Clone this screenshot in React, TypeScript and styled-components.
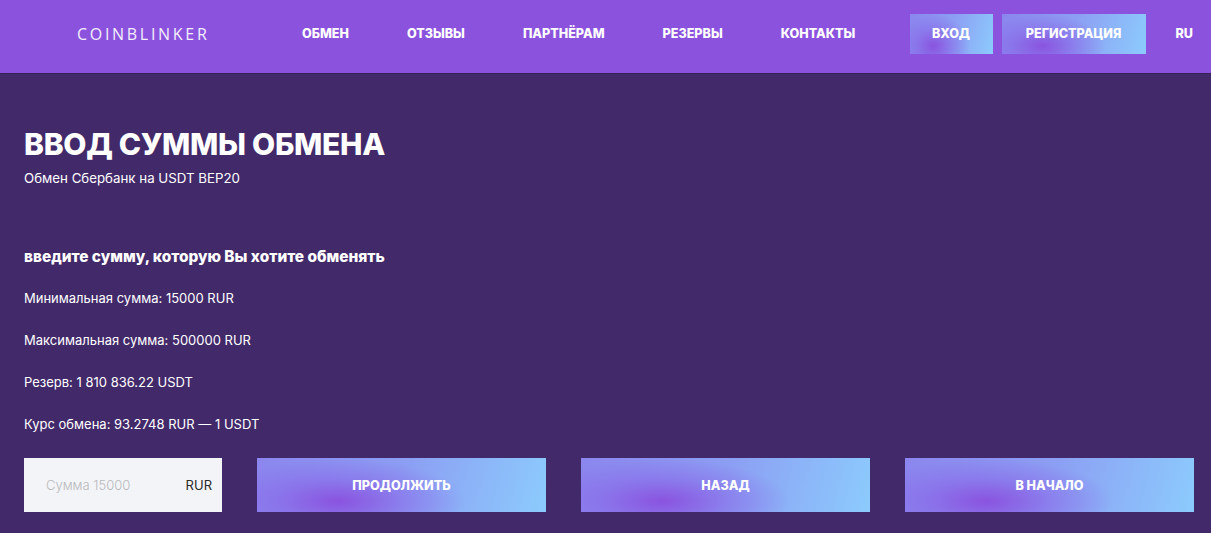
import React from "react";
import styled, { createGlobalStyle } from "styled-components";

const Global = createGlobalStyle`
  html, body { margin: 0; padding: 0; background: #42296a; }
  body { font-family: Inter, "Noto Sans", sans-serif; color: #fff; }
  * { box-sizing: border-box; }
`;

const Page = styled.div`
  min-height: 533px;
  background: #42296a;
`;

const Header = styled.header`
  height: 74px;
  background: #8b53dd;
  border-bottom: 1px solid #36205a;
  display: flex;
  align-items: center;
  padding: 0 18px 6px 77px;
`;

const Logo = styled.div`
  font-family: "Open Sans", sans-serif;
  font-weight: 400;
  font-size: 16px;
  letter-spacing: 2.7px;
  color: #f4eefc;
  width: 225px;
`;

const Nav = styled.nav`
  display: flex;
  gap: 58px;
  flex: 1;
`;

const NavLink = styled.a`
  font-weight: 800;
  font-size: 12.6px;
  text-transform: uppercase;
  color: #fff;
  text-decoration: none;
`;

const Gradient = `
  background:
    radial-gradient(ellipse 55% 100% at 28% 80%, rgba(138,80,222,0.95) 0%, rgba(138,100,232,0.55) 40%, rgba(140,140,240,0) 80%),
    linear-gradient(105deg, #8b86ee 0%, #8c9ff3 50%, #8ccbfd 100%);
`;

const AuthGroup = styled.div`
  display: flex;
  align-items: center;
  gap: 9px;
`;

const HeadBtn = styled.a<{ $w: number }>`
  ${Gradient}
  width: ${(p) => p.$w}px;
  height: 40px;
  display: flex;
  align-items: center;
  justify-content: center;
  font-weight: 800;
  font-size: 12.6px;
  color: #fff;
  text-transform: uppercase;
`;

const Lang = styled.div`
  margin-left: 30px;
  font-weight: 800;
  font-size: 12.6px;
`;

const Main = styled.main`
  padding: 52px 17px 20px 24px;
`;

const Title = styled.h1`
  margin: 0;
  font-size: 30px;
  font-weight: 800;
  line-height: 36px;
  letter-spacing: -0.3px;
`;

const Subtitle = styled.p`
  margin: 8px 0 0;
  font-size: 13.3px;
  line-height: 16px;
`;

const Prompt = styled.h3`
  margin: 62px 0 0;
  font-size: 15.4px;
  font-weight: 800;
  line-height: 18px;
`;

const InfoList = styled.div`
  margin-top: 24px;
  display: flex;
  flex-direction: column;
  gap: 26px;
`;

const Info = styled.div`
  font-size: 13px;
  line-height: 16px;
`;

const ActionRow = styled.div`
  margin-top: 26px;
  display: grid;
  grid-template-columns: 198px 1fr 1fr 1fr;
  gap: 35px;
  height: 54px;
`;

const AmountBox = styled.div`
  background: #f3f4f7;
  display: flex;
  align-items: center;
  justify-content: space-between;
  padding: 0 10px 0 20px;
`;

const AmountInput = styled.input`
  border: none;
  background: transparent;
  outline: none;
  font-family: inherit;
  font-size: 13px;
  font-weight: 300;
  width: 110px;
  color: #333;
  &::placeholder { color: #b8b9bd; }
`;

const Currency = styled.span`
  font-size: 13px;
  color: #2a2a2a;
`;

const ActionBtn = styled.button`
  ${Gradient}
  border: none;
  font-family: inherit;
  font-weight: 800;
  font-size: 12.6px;
  color: #fff;
  text-transform: uppercase;
  cursor: pointer;
`;

export default function App() {
  return (
    <Page>
      <Global />
      <Header>
        <Logo>COINBLINKER</Logo>
        <Nav>
          {["Обмен", "Отзывы", "Партнёрам", "Резервы", "Контакты"].map((t) => (
            <NavLink key={t}>{t}</NavLink>
          ))}
        </Nav>
        <AuthGroup>
          <HeadBtn $w={83}>Вход</HeadBtn>
          <HeadBtn $w={144}>Регистрация</HeadBtn>
        </AuthGroup>
        <Lang>RU</Lang>
      </Header>
      <Main>
        <Title>ВВОД СУММЫ ОБМЕНА</Title>
        <Subtitle>Обмен Сбербанк на USDT BEP20</Subtitle>
        <Prompt>введите сумму, которую Вы хотите обменять</Prompt>
        <InfoList>
          <Info>Минимальная сумма: 15000 RUR</Info>
          <Info>Максимальная сумма: 500000 RUR</Info>
          <Info>Резерв: 1 810 836.22 USDT</Info>
          <Info>Курс обмена: 93.2748 RUR — 1 USDT</Info>
        </InfoList>
        <ActionRow>
          <AmountBox>
            <AmountInput placeholder="Сумма 15000" />
            <Currency>RUR</Currency>
          </AmountBox>
          <ActionBtn>Продолжить</ActionBtn>
          <ActionBtn>Назад</ActionBtn>
          <ActionBtn>В начало</ActionBtn>
        </ActionRow>
      </Main>
    </Page>
  );
}
